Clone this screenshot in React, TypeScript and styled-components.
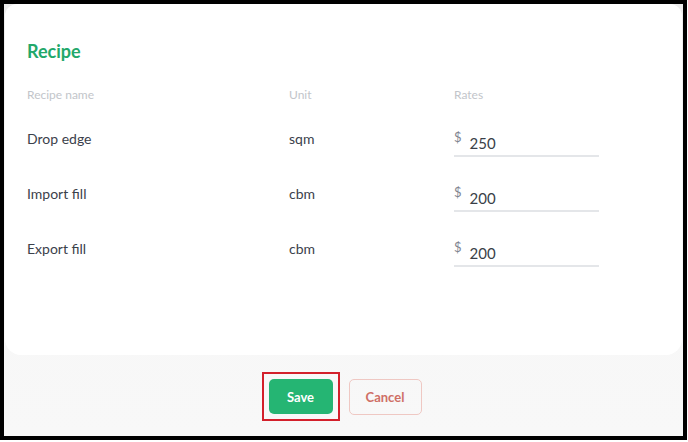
import React from "react";
import styled, { createGlobalStyle } from "styled-components";

const GlobalStyle = createGlobalStyle`
  body {
    margin: 0;
    background: #ffffff;
    font-family: "Lato", "Noto Sans", sans-serif;
  }
`;

const recipes = [
  { id: 1, name: "Drop edge", unit: "sqm", rate: "250" },
  { id: 2, name: "Import fill", unit: "cbm", rate: "200" },
  { id: 3, name: "Export fill", unit: "cbm", rate: "200" },
];

function App() {
  return (
    <>
      <GlobalStyle />
      <Frame>
        <Card>
          <Title>Recipe</Title>
          <HeaderRow>
            <HeaderCell>Recipe name</HeaderCell>
            <HeaderCell>Unit</HeaderCell>
            <HeaderCell>Rates</HeaderCell>
          </HeaderRow>
          {recipes.map((item) => {
            return (
              <Row key={item.id}>
                <Cell>{item.name}</Cell>
                <Cell>{item.unit}</Cell>
                <RateField>
                  <Dollar>$</Dollar>
                  <RateValue>{item.rate}</RateValue>
                </RateField>
              </Row>
            );
          })}
        </Card>
        <Footer>
          <Highlight>
            <SaveButton>Save</SaveButton>
          </Highlight>
          <CancelButton>Cancel</CancelButton>
        </Footer>
      </Frame>
    </>
  );
}

const Frame = styled.div`
  display: flex;
  flex-direction: column;
  box-sizing: border-box;
  width: 687px;
  height: 440px;
  border: 4px solid #000000;
  background: linear-gradient(#ececec, #f6f6f6 30%, #f8f8f8);
`;

const Card = styled.div`
  display: flex;
  flex-direction: column;
  height: 351px;
  box-sizing: border-box;
  margin: 0 1px;
  padding: 37px 22px 0;
  background-color: #ffffff;
  border-radius: 12px 12px 16px 16px;
`;

const Title = styled.div`
  font-size: 18px;
  font-weight: 700;
  line-height: 21px;
  color: #22a86a;
  margin-bottom: 25px;
`;

const HeaderRow = styled.div`
  display: grid;
  grid-template-columns: 262px 165px 145px;
  margin-bottom: 27px;
`;

const HeaderCell = styled.div`
  font-size: 12px;
  line-height: 16px;
  color: #c2c5ca;
`;

const Row = styled.div`
  display: grid;
  grid-template-columns: 262px 165px 145px;
  align-items: start;
  height: 55px;
`;

const Cell = styled.div`
  font-size: 14px;
  line-height: 18px;
  color: #3b414b;
`;

const RateField = styled.div`
  display: flex;
  align-items: flex-start;
  gap: 8px;
  height: 27px;
  box-sizing: border-box;
  border-bottom: 2px solid #e4e6e9;
`;

const Dollar = styled.span`
  font-size: 13px;
  line-height: 15px;
  color: #7f8590;
`;

const RateValue = styled.span`
  margin-top: 4px;
  font-size: 15px;
  line-height: 18px;
  color: #3a3f48;
`;

const Footer = styled.div`
  flex: 1;
  display: flex;
  align-items: center;
  justify-content: center;
  gap: 9px;
  padding: 2px 4px 0 0;
`;

const Highlight = styled.div`
  padding: 5px;
  border: 2px solid #d3202b;
`;

const SaveButton = styled.button`
  width: 64px;
  height: 35px;
  border: none;
  border-radius: 5px;
  background-color: #25b573;
  color: #ffffff;
  font-family: inherit;
  font-size: 13px;
  font-weight: 700;
`;

const CancelButton = styled.button`
  width: 73px;
  height: 36px;
  border: 1px solid #efc8c3;
  border-radius: 5px;
  background-color: transparent;
  color: #cf6f66;
  font-family: inherit;
  font-size: 13px;
  font-weight: 700;
`;

export default App;
